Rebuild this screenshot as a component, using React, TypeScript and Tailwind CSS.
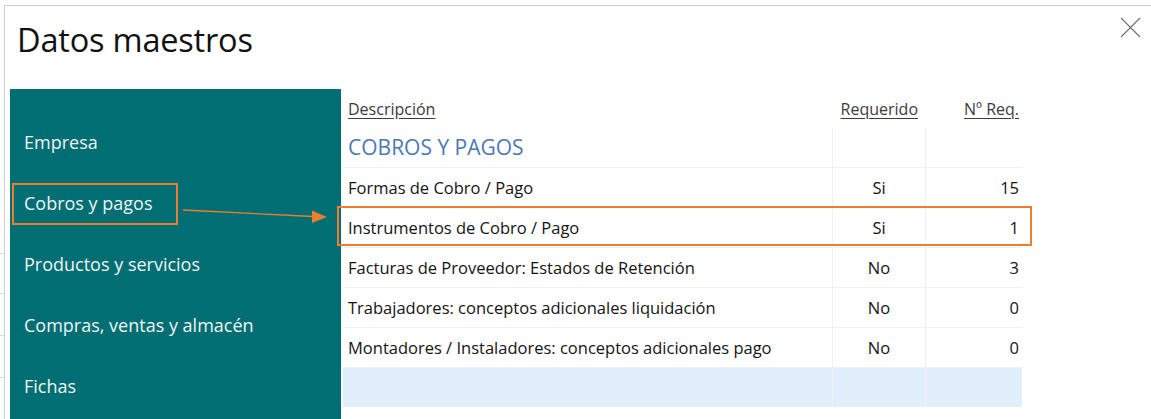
const menu = [
  'Empresa',
  'Cobros y pagos',
  'Productos y servicios',
  'Compras, ventas y almacén',
  'Fichas',
];

const rows = [
  { desc: 'Formas de Cobro / Pago', req: 'Si', n: '15' },
  { desc: 'Instrumentos de Cobro / Pago', req: 'Si', n: '1', mark: true },
  { desc: 'Facturas de Proveedor: Estados de Retención', req: 'No', n: '3' },
  { desc: 'Trabajadores: conceptos adicionales liquidación', req: 'No', n: '0' },
  { desc: 'Montadores / Instaladores: conceptos adicionales pago', req: 'No', n: '0' },
];

function Cell({ children, className = '' }: { children?: React.ReactNode; className?: string }) {
  return <div className={`h-full flex items-center ${className}`}>{children}</div>;
}

export default function App() {
  return (
    <div
      className="relative w-[1151px] h-[419px] overflow-hidden bg-white pl-[4px] pt-[5px]"
      style={{ fontFamily: '"Open Sans", "Noto Sans", sans-serif' }}
    >
      {/* window behind, left edge */}
      <div className="absolute left-0 top-[253px] w-[4px] border-t border-[#d9d9d9]" />
      <div className="absolute left-0 top-[293px] w-[4px] border-t border-[#d9d9d9]" />
      <div className="absolute left-0 top-[335px] w-[4px] border-t border-[#d9d9d9]" />
      <div className="absolute left-0 top-[377px] w-[4px] border-t border-[#d9d9d9]" />

      <div className="h-full border-t border-l border-[#cfcfcf] flex flex-col">
        <div className="h-[83px] shrink-0 flex items-start justify-between">
          <h1 className="pl-[12px] pt-[12px] text-[32.5px] leading-[44px] text-[#111] tracking-[-0.2px]">
            Datos maestros
          </h1>
          <button className="mr-[10px] mt-[11px] w-[21px] h-[21px] text-[#6f6f6f]">
            <svg viewBox="0 0 21 21" width="21" height="21" fill="none" stroke="currentColor" strokeWidth="1.1">
              <path d="M1 1 L20 20 M20 1 L1 20" />
            </svg>
          </button>
        </div>

        <div className="flex-1 flex">
          <nav className="ml-[5px] w-[331px] bg-[#006e72] pt-[23px] flex flex-col">
            {menu.map((m, i) => (
              <div key={m} className="h-[61px] flex items-center">
                <span
                  className={`ml-[2px] h-[42px] pl-[10px] flex items-center border-2 text-[18px] text-[#eef5f5] whitespace-nowrap ${
                    i === 1 ? 'w-[166px] border-[#ed7d31]' : 'border-transparent'
                  }`}
                >
                  {m}
                </span>
              </div>
            ))}
          </nav>

          <div className="ml-[2px] w-[679px] text-[16.5px] text-[#141414]">
            <div className="h-[39px] grid grid-cols-[489px_93px_97px] items-center text-[16px] text-[#3c3c3c]">
              <span className="pl-[5px] underline underline-offset-[3px]">Descripción</span>
              <span className="text-right pr-[7px] underline underline-offset-[3px]">Requerido</span>
              <span className="text-right pr-[3px] underline underline-offset-[3px]">Nº Req.</span>
            </div>

            <div className="h-[40px] grid grid-cols-[489px_93px_97px] border-b border-[#f0f0f0]">
              <Cell className="pl-[5px] text-[21px] text-[#4c78b5]">COBROS Y PAGOS</Cell>
              <Cell className="border-l border-[#f0f0f0]" />
              <Cell className="border-l border-[#f0f0f0]" />
            </div>

            {rows.map((r) => (
              <div
                key={r.desc}
                className="relative h-[40px] grid grid-cols-[489px_93px_97px] border-b border-[#f0f0f0]"
              >
                <Cell className="pl-[5px] pt-[1px] whitespace-nowrap">{r.desc}</Cell>
                <Cell className="justify-center pt-[1px] border-l border-[#f0f0f0]">{r.req}</Cell>
                <Cell className="justify-end pr-[3px] pt-[1px] border-l border-[#f0f0f0]">{r.n}</Cell>
                {r.mark && (
                  <div className="absolute -left-[6px] -right-[10px] -top-[2px] bottom-[1px] border-2 border-[#ed7d31]" />
                )}
              </div>
            ))}

            <div className="h-[39px] grid grid-cols-[489px_93px_97px] bg-[#e1eefb]">
              <Cell />
              <Cell className="border-l border-[#f0f0f0]" />
              <Cell className="border-l border-[#f0f0f0]" />
            </div>
          </div>
        </div>
      </div>

      {/* annotation arrow */}
      <svg className="absolute left-0 top-0 pointer-events-none" width="1151" height="419">
        <line x1="183" y1="210" x2="313" y2="216.5" stroke="#ed7d31" strokeWidth="1.3" />
        <polygon points="312,210.5 327,217 312,223" fill="#ed7d31" />
      </svg>
    </div>
  );
}
